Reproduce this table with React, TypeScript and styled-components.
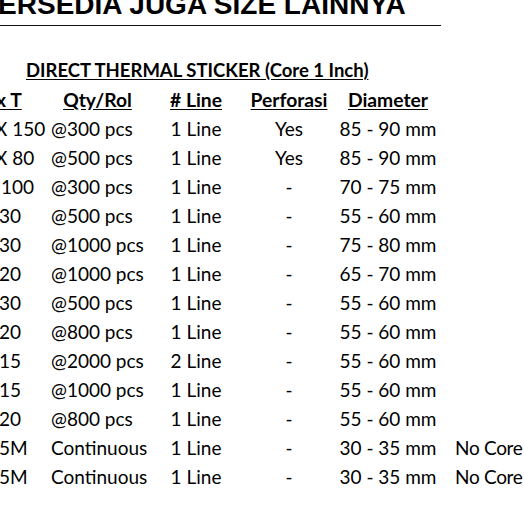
import React from 'react';
import styled, { createGlobalStyle } from 'styled-components';

const GlobalStyle = createGlobalStyle`
    html, body {
        margin: 0;
        padding: 0;
        background: #fff;
    }
    body {
        width: 524px;
        height: 524px;
        overflow: hidden;
    }
`;

interface StickerRow {
    size: string;
    shift: number;
    qty: string;
    line: string;
    perf: string;
    dia: string;
    note?: string;
}

const rows: StickerRow[] = [
    { size: 'X 150', shift: -5, qty: '@300 pcs', line: '1 Line', perf: 'Yes', dia: '85 - 90 mm' },
    { size: 'X 80', shift: -5, qty: '@500 pcs', line: '1 Line', perf: 'Yes', dia: '85 - 90 mm' },
    { size: '100', shift: 1, qty: '@300 pcs', line: '1 Line', perf: '-', dia: '70 - 75 mm' },
    { size: '30', shift: -1, qty: '@500 pcs', line: '1 Line', perf: '-', dia: '55 - 60 mm' },
    { size: '30', shift: -1, qty: '@1000 pcs', line: '1 Line', perf: '-', dia: '75 - 80 mm' },
    { size: '20', shift: -1, qty: '@1000 pcs', line: '1 Line', perf: '-', dia: '65 - 70 mm' },
    { size: '30', shift: -1, qty: '@500 pcs', line: '1 Line', perf: '-', dia: '55 - 60 mm' },
    { size: '20', shift: -1, qty: '@800 pcs', line: '1 Line', perf: '-', dia: '55 - 60 mm' },
    { size: '15', shift: -1, qty: '@2000 pcs', line: '2 Line', perf: '-', dia: '55 - 60 mm' },
    { size: '15', shift: -1, qty: '@1000 pcs', line: '1 Line', perf: '-', dia: '55 - 60 mm' },
    { size: '20', shift: -1, qty: '@800 pcs', line: '1 Line', perf: '-', dia: '55 - 60 mm' },
    { size: '5M', shift: -1, qty: 'Continuous', line: '1 Line', perf: '-', dia: '30 - 35 mm', note: 'No Core' },
    { size: '5M', shift: -1, qty: 'Continuous', line: '1 Line', perf: '-', dia: '30 - 35 mm', note: 'No Core' },
];

const App: React.FC = () => {
    return (
        <Sheet>
            <GlobalStyle />
            <TitleCell>
                <TitleText>TERSEDIA JUGA SIZE LAINNYA</TitleText>
            </TitleCell>
            <EmptyRow />
            <SubtitleRow>
                <u>DIRECT THERMAL STICKER (Core 1 Inch)</u>
            </SubtitleRow>
            <GridRow $bold>
                <Cell $shift={-4}><u>x T</u></Cell>
                <Cell $center><u>Qty/Rol</u></Cell>
                <Cell $center><u># Line</u></Cell>
                <Cell $center><u>Perforasi</u></Cell>
                <Cell $center><u>Diameter</u></Cell>
                <Cell />
            </GridRow>
            {rows.map((r, i) => (
                <GridRow key={i}>
                    <Cell $shift={r.shift}>{r.size}</Cell>
                    <Cell $shift={3}>{r.qty}</Cell>
                    <Cell $center>{r.line}</Cell>
                    <Cell $center>{r.perf}</Cell>
                    <Cell $center>{r.dia}</Cell>
                    <NoteCell>{r.note}</NoteCell>
                </GridRow>
            ))}
        </Sheet>
    );
};

export default App;

const Sheet = styled.div`
    width: 524px;
    height: 524px;
    overflow: hidden;
    font-family: Lato, "Open Sans", sans-serif;
    font-size: 19px;
    color: #000;
`

const TitleCell = styled.div`
    width: 441px;
    height: 25px;
    border-bottom: 1px solid #111;
    overflow: hidden;
`

const TitleText = styled.div`
    margin: -9px 0 0 -19px;
    font-family: "Liberation Sans", Arial, sans-serif;
    font-weight: 700;
    font-size: 28px;
    line-height: 28px;
    white-space: nowrap;
`

const EmptyRow = styled.div`
    height: 30px;
`

const SubtitleRow = styled.div`
    height: 29px;
    line-height: 29px;
    padding-left: 26px;
    font-size: 18.5px;
    font-weight: 700;
    white-space: nowrap;

    u {
        text-underline-offset: 2px;
    }
`

const GridRow = styled.div<{ $bold?: boolean }>`
    display: grid;
    grid-template-columns: 48px 99px 98px 88px 110px 1fr;
    height: 29px;
    line-height: 29px;
    font-size: ${p => p.$bold ? 19.3 : 19}px;
    font-weight: ${p => p.$bold ? 700 : 400};

    u {
        text-underline-offset: 2px;
    }
`

const Cell = styled.div<{ $center?: boolean; $shift?: number }>`
    text-align: ${p => p.$center ? 'center' : 'left'};
    padding-left: ${p => p.$shift && p.$shift > 0 ? p.$shift : 0}px;
    margin-left: ${p => p.$shift && p.$shift < 0 ? p.$shift : 0}px;
    white-space: nowrap;
    overflow: visible;
`

const NoteCell = styled.div`
    padding-left: 12px;
    letter-spacing: -0.3px;
    white-space: nowrap;
`
